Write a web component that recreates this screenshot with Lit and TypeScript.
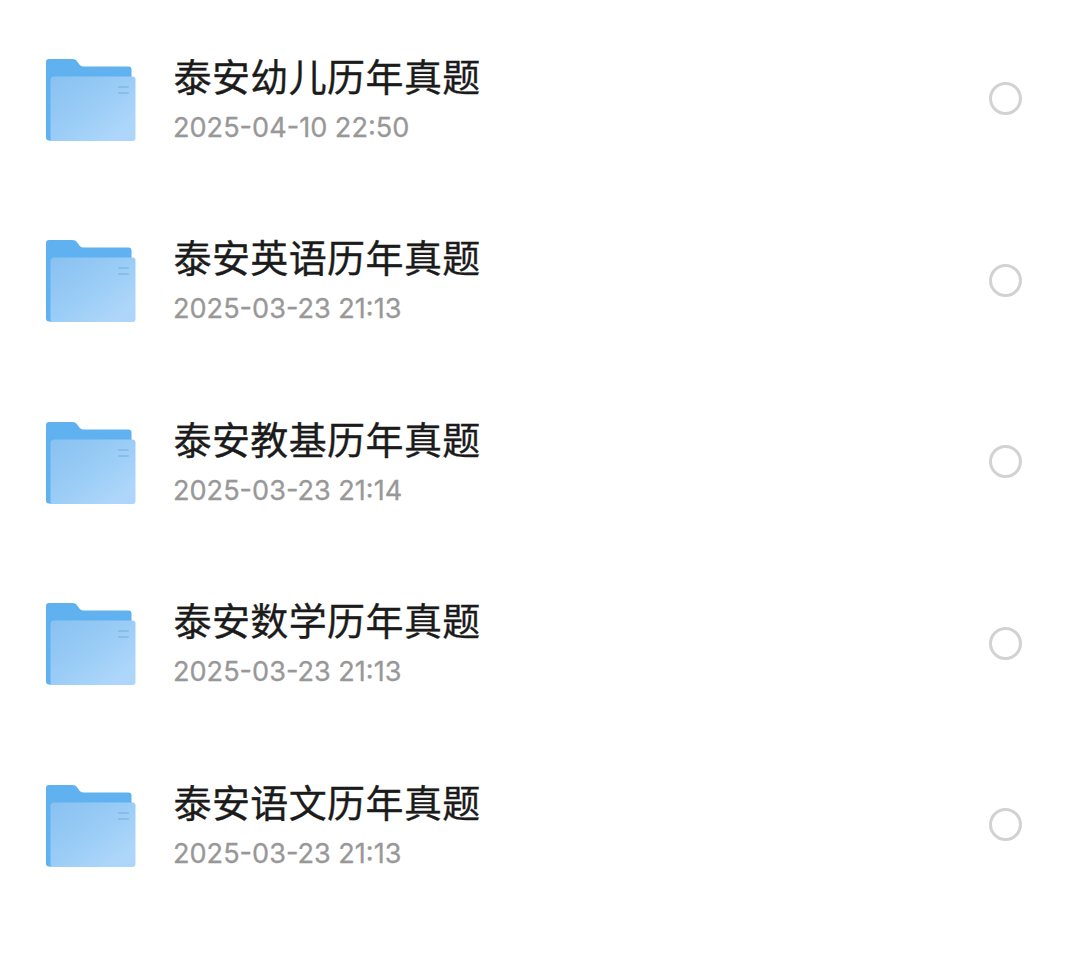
import { LitElement, html, css, svg } from "lit";
import { customElement } from "lit/decorators.js";

const ITEMS = [
  ["泰安幼儿历年真题", "2025-04-10 22:50"],
  ["泰安英语历年真题", "2025-03-23 21:13"],
  ["泰安教基历年真题", "2025-03-23 21:14"],
  ["泰安数学历年真题", "2025-03-23 21:13"],
  ["泰安语文历年真题", "2025-03-23 21:13"],
];

let uid = 0;
function folder() {
  const id = `f${uid++}`;
  return html`<svg class="folder" width="90" height="83" viewBox="0 0 90 83">
    ${svg`<defs>
      <linearGradient id="${id}a" x1="0" y1="0" x2="1" y2="1">
        <stop offset="0" stop-color="#88c1f1"/>
        <stop offset="0.5" stop-color="#9bcdf6"/>
        <stop offset="0.85" stop-color="#aed6fa"/>
        <stop offset="1" stop-color="#acd5f9"/>
      </linearGradient>
    </defs>
    <path d="M3 0H26C29 0 30.500 1 32 3.500C33.500 6 35 7.500 38 7.500H82.500C84.500 7.500 85.500 8.500 85.500 10.500V20H6V81.500H3C1 81.500 0 80.500 0 78.500V3C0 1 1 0 3 0Z" fill="#5fb2ef"/>
    <path d="M6 19H16V81.500H3C5 81.500 6 80 6 78Z" fill="#5aaeec"/>
    <path d="M8 17.500H86.500C88.500 17.500 89.500 18.500 89.500 20.500V79C89.500 81 88.500 82 86.500 82H7.500C5.500 82 4.500 81 4.500 79V21C4.500 19 6 17.500 8 17.500Z" fill="url(#${id}a)"/>
    <rect x="72" y="27" width="11" height="2" rx="1" fill="#78b3e6" opacity=".6"/>
    <rect x="72" y="33" width="11" height="2" rx="1" fill="#78b3e6" opacity=".6"/>`}
  </svg>`;
}

@customElement("app-root")
export class AppRoot extends LitElement {
  static styles = css`
    :host {
      display: block;
      width: 1080px;
      height: 954px;
      background: #fff;
      font-family: "Inter", "Noto Sans CJK SC", sans-serif;
    }
    .list {
      display: flex;
      flex-direction: column;
      padding-top: 8.25px;
    }
    .row {
      height: 181.5px;
      display: flex;
      align-items: center;
      padding: 0 58px 0 46px;
      box-sizing: border-box;
    }
    .folder {
      flex: none;
      margin-right: 37.5px;
      margin-top: 2.5px;
    }
    .text {
      flex: 1;
      display: flex;
      flex-direction: column;
      gap: 12px;
      margin-top: -1px;
    }
    .title {
      font-family: "Noto Sans CJK SC", sans-serif;
      font-size: 38px;
      font-weight: 400;
      letter-spacing: 0.4px;
      line-height: 46px;
      color: #1b1b1b;
      -webkit-text-stroke: 0.35px #1b1b1b;
    }
    .date {
      font-size: 27.1px;
      font-weight: 400;
      line-height: 36px;
      color: #989898;
      -webkit-text-stroke: 0.3px #989898;
      margin-left: -0.5px;
    }
    .radio {
      flex: none;
      width: 33px;
      height: 33px;
      box-sizing: border-box;
      border: 3px solid #d2d2d2;
      border-radius: 50%;
      margin-top: -1px;
    }
  `;

  render() {
    return html`<div class="list">
      ${ITEMS.map(
        ([t, d]) => html`<div class="row">
          ${folder()}
          <div class="text">
            <div class="title">${t}</div>
            <div class="date">${d}</div>
          </div>
          <div class="radio"></div>
        </div>`
      )}
    </div>`;
  }
}
